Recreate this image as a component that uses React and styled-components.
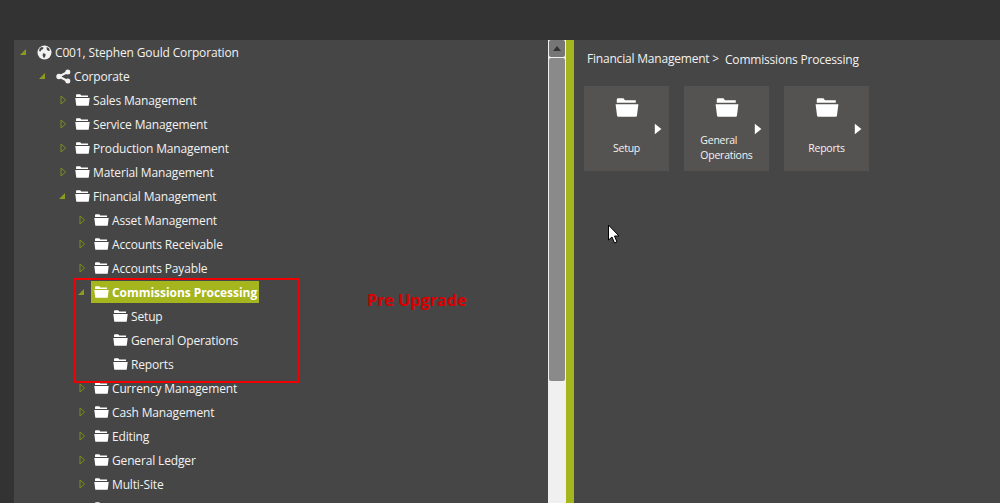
import React from "react";
import styled, { createGlobalStyle } from "styled-components";

const Global = createGlobalStyle`
  html, body { margin: 0; padding: 0; background: #333333; }
  body { font-family: "Open Sans", "Noto Sans", sans-serif; overflow: hidden; }
`;
const Page = styled.div`
  position: relative; width: 1000px; height: 503px; overflow: hidden;
  display: flex; flex-direction: column; background: #333333;
`;
const TopBar = styled.div`height: 40px; flex: none; background: #333333;`;
const Main = styled.div`flex: 1; min-height: 0; display: flex; padding-left: 14px;`;
const TreePanel = styled.div`
  width: 534px; flex: none; background: #464646; overflow: hidden;
`;
const Row = styled.div`
  height: 24px; display: flex; align-items: center; flex: none;
  padding-left: ${p => p.$pad}px; color: #f2f2f2; font-size: 12px; white-space: nowrap;
  letter-spacing: -0.15px;
`;
const ArrowSlot = styled.span`
  width: ${p => p.$w}px; flex: none; display: flex; align-items: center;
  padding-left: ${p => p.$inset}px; box-sizing: border-box;
`;
const IconSlot = styled.span`width: 18px; height: 14px; flex: none; display: flex; align-items: center;`;
const Selected = styled.span`
  display: flex; align-items: center; height: 22px; margin-left: -3px; padding: 0 2px 0 3px;
  background: #a5b51d; color: #fff; font-weight: 700; letter-spacing: -0.05px;
`;
const Scrollbar = styled.div`
  width: 18px; flex: none; background: #f0f0f0; display: flex; flex-direction: column;
  align-items: center;
`;
const ScrollBtn = styled.div`
  width: 16px; height: 17px; flex: none; background: #767676;
  border-radius: 2px; box-sizing: border-box;
  display: flex; align-items: center; justify-content: center;
`;
const ScrollThumb = styled.div`
  width: 16px; height: 323px; flex: none; margin-top: 1px; background: #8a8a8a;
  border-radius: 2px;
`;
const Splitter = styled.div`width: 8px; flex: none; background: #a5b51d;`;
const Content = styled.div`flex: 1; background: #464646; padding: 10px 0 0 10px;`;
const Crumbs = styled.div`
  display: flex; align-items: flex-start; height: 20px; padding-left: 3px; gap: 6px;
  color: #f2f2f2; font-size: 12px; line-height: 18px; white-space: nowrap; letter-spacing: -0.2px;
`;
const Crumb = styled.span`margin-top: ${p => p.$drop ? 1 : 0}px;`;
const Tiles = styled.div`display: flex; gap: 15px; margin-top: 16px;`;
const Tile = styled.div`
  position: relative; width: 85px; height: 85px; background: #555351;
  display: flex; flex-direction: column; align-items: center; color: #f2f2f2;
  font-size: 10.5px; line-height: 15px; letter-spacing: -0.25px;
`;
const TileIcon = styled.div`height: 19px; margin-top: 12px; flex: none; display: flex;`;
const TileLabel = styled.div`
  width: min-content; text-align: left; margin-top: ${p => p.$two ? 16 : 24}px;
`;
const TileArrow = styled.svg`position: absolute; left: 70px; top: 37px;`;
const RedBox = styled.div`
  position: absolute; left: 74px; top: 278px; width: 225px; height: 105px;
  border: 2px solid #f00000; box-sizing: border-box;
`;
const Note = styled.div`
  position: absolute; left: 367px; top: 289px; color: #d80000; font-size: 16px; font-weight: 700;
  letter-spacing: 0.1px; white-space: nowrap;
`;
const Cursor = styled.svg`position: absolute; left: 607px; top: 224px;`;

const Folder = ({ w = 15, h = 12 }) => (
  <svg width={w} height={h} viewBox="0 0 16 13">
    <path fill="#fff" d="M1 1.2 C1 .6 1.4 .2 2 .2 H5.6 L6.6 1.6 H14 V3.2 H1 Z M.2 4.2 H15.8 L14.8 12.2 C14.8 12.6 14.4 12.8 14 12.8 H2 C1.6 12.8 1.2 12.6 1.2 12.2 Z" />
  </svg>
);
const Expanded = () => (
  <svg width="8" height="8" viewBox="0 0 8 8"><path fill="#8d9b1c" d="M7 1 V7 H1 Z" /></svg>
);
const Collapsed = () => (
  <svg width="7" height="10" viewBox="0 0 7 10"><path fill="none" stroke="#7f8c1c" strokeWidth="1" d="M1 1 L5.6 5 L1 9 Z" /></svg>
);
const Globe = () => (
  <svg width="15" height="15" viewBox="0 0 15 15">
    <circle cx="7.5" cy="7.5" r="7" fill="#f2f2f2" />
    <path fill="#464646" d="M4.4 2 L6.6 2.6 L6 4.2 L4.4 4.8 L3.6 6.6 L2 6 L2.6 3.6 Z M6 8.2 L8.4 8.8 L8.6 10.6 L7.4 13 L6.4 12.6 L5.6 10.6 Z M9.6 1.8 L12 3.2 L13 5.6 L11.4 6 L9.8 4.8 Z" />
  </svg>
);
const Share = () => (
  <svg width="15" height="15" viewBox="0 0 15 15">
    <path stroke="#f2f2f2" strokeWidth="2" fill="none" d="M11.5 3 L3 7.5 L11.5 12" />
    <circle cx="3" cy="7.5" r="2.7" fill="#f2f2f2" />
    <circle cx="11.8" cy="3" r="2.5" fill="#f2f2f2" />
    <circle cx="11.8" cy="12" r="2.5" fill="#f2f2f2" />
  </svg>
);

const rows = [
  { l: 0, t: "C001, Stephen Gould Corporation", a: "e", i: "g" },
  { l: 1, t: "Corporate", a: "e", i: "s" },
  { l: 2, t: "Sales Management", a: "c" },
  { l: 2, t: "Service Management", a: "c" },
  { l: 2, t: "Production Management", a: "c" },
  { l: 2, t: "Material Management", a: "c" },
  { l: 2, t: "Financial Management", a: "e" },
  { l: 3, t: "Asset Management", a: "c" },
  { l: 3, t: "Accounts Receivable", a: "c" },
  { l: 3, t: "Accounts Payable", a: "c" },
  { l: 3, t: "Commissions Processing", a: "e", sel: true },
  { l: 4, t: "Setup" },
  { l: 4, t: "General Operations" },
  { l: 4, t: "Reports" },
  { l: 3, t: "Currency Management", a: "c" },
  { l: 3, t: "Cash Management", a: "c" },
  { l: 3, t: "Editing", a: "c" },
  { l: 3, t: "General Ledger", a: "c" },
  { l: 3, t: "Multi-Site", a: "c" },
  { l: 3, t: "", a: "c" },
];
const padFor = [5, 24, 44, 63, 82];

const TreeRow = ({ r }) => {
  const icon = r.i === "g" ? <Globe /> : r.i === "s" ? <Share /> : <Folder />;
  return (
    <Row $pad={padFor[r.l]}>
      <ArrowSlot $w={r.l < 2 ? 18 : 17} $inset={r.a === "c" ? 2 : 0}>
        {r.a === "e" ? <Expanded /> : r.a === "c" ? <Collapsed /> : null}
      </ArrowSlot>
      {r.sel ? (
        <Selected><IconSlot><Folder /></IconSlot>{r.t}</Selected>
      ) : (
        <><IconSlot>{icon}</IconSlot>{r.t}</>
      )}
    </Row>
  );
};

const TileBox = ({ label, two }) => (
  <Tile>
    <TileIcon><Folder w={24} h={19} /></TileIcon>
    <TileLabel $two={two}>{label}</TileLabel>
    <TileArrow width="8" height="12" viewBox="0 0 8 12"><path fill="#fff" d="M.8 .8 L7.4 6 L.8 11.2 Z" /></TileArrow>
  </Tile>
);

export default function App() {
  return (
    <Page>
      <Global />
      <TopBar />
      <Main>
        <TreePanel>{rows.map((r, i) => <TreeRow key={i} r={r} />)}</TreePanel>
        <Scrollbar>
          <ScrollBtn>
            <svg width="8" height="5" viewBox="0 0 8 5"><path fill="#333" d="M4 0 L8 5 H0 Z" /></svg>
          </ScrollBtn>
          <ScrollThumb />
        </Scrollbar>
        <Splitter />
        <Content>
          <Crumbs><Crumb>Financial Management &gt;</Crumb><Crumb $drop>Commissions Processing</Crumb></Crumbs>
          <Tiles>
            <TileBox label="Setup" />
            <TileBox label="General Operations" two />
            <TileBox label="Reports" />
          </Tiles>
        </Content>
      </Main>
      <RedBox />
      <Note>Pre Upgrade</Note>
      <Cursor width="13" height="21" viewBox="0 0 13 21">
        <path fill="#fff" stroke="#000" strokeWidth="1" d="M1.5 1 V16 L5 13 L7.5 19 L10 18 L7.5 12 H12 Z" />
      </Cursor>
    </Page>
  );
}
